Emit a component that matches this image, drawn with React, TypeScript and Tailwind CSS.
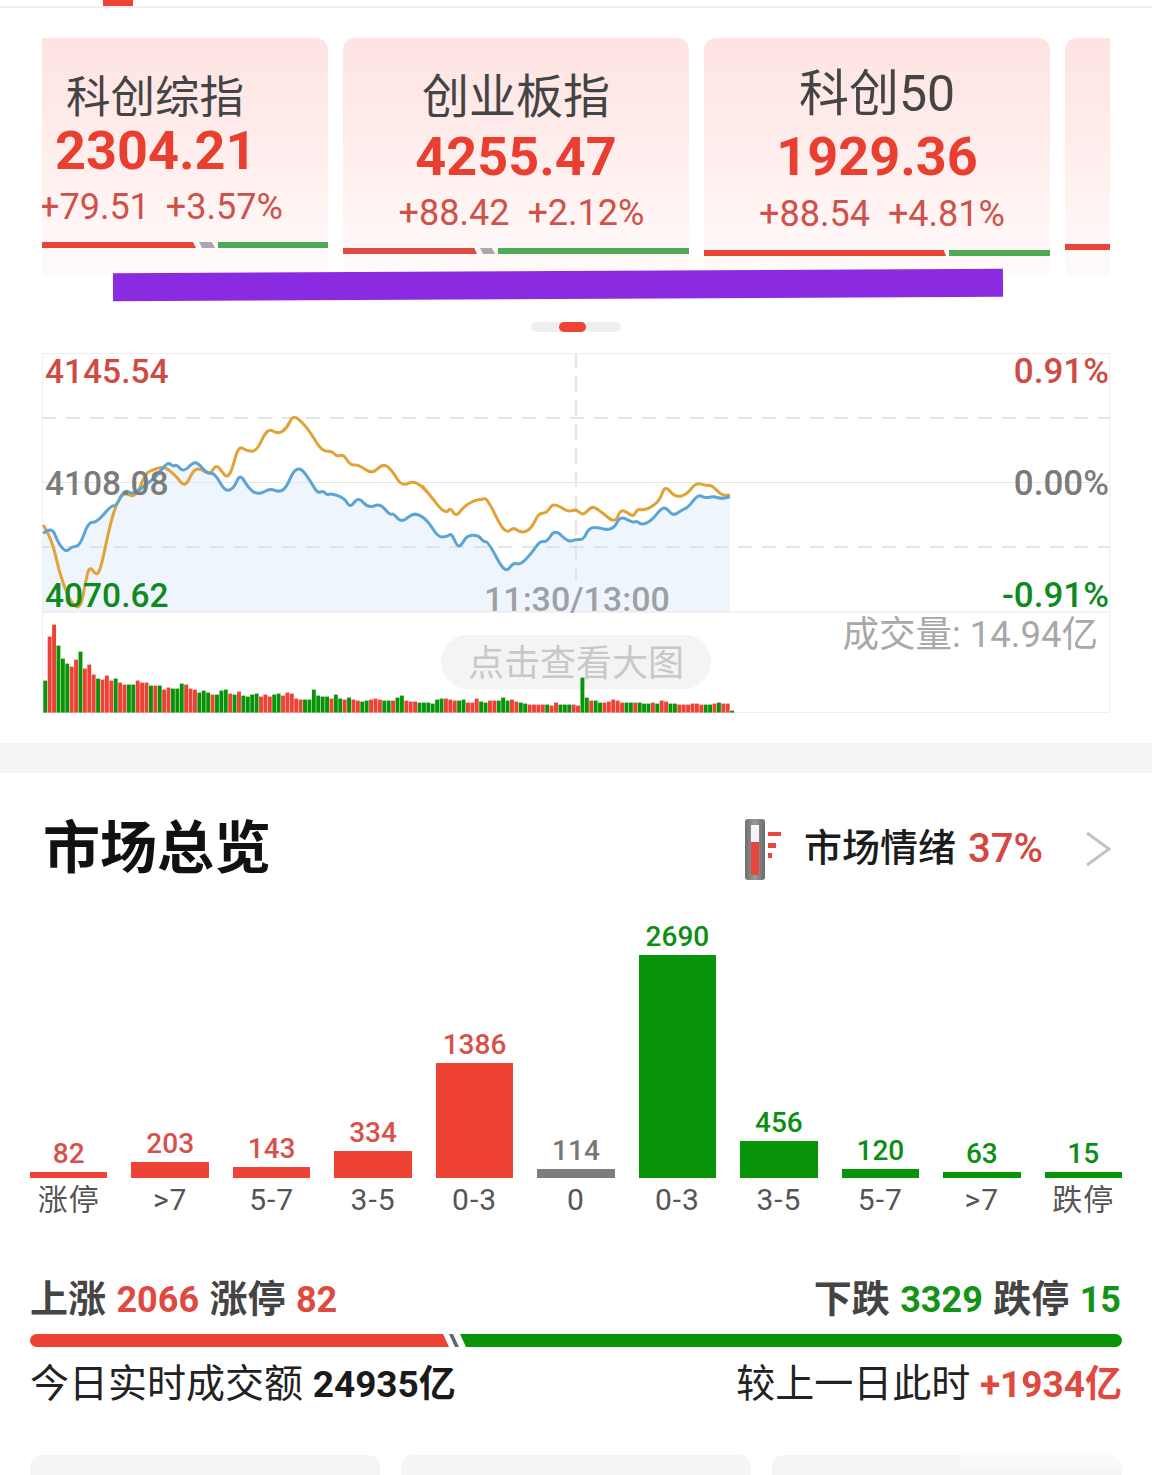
import React from 'react';

const RED = '#ee4235';
const GREEN = '#089408';

// points read off the reference, in zoom-crop pixels
const orangeA = [[40,540],[65,580],[90,690],[120,770],[150,795],[165,720],[178,660],[200,695],[215,660],[240,540],[258,480],[280,440],[318,460],[345,385],[375,372],[405,365],[440,395],[465,428],[490,375],[510,370],[540,390],[560,355],[588,400],[605,380],[625,302],[650,318],[680,320],[712,248],[745,268],[770,250],[788,212],[810,225],[840,260],[865,303],[885,320],[905,318],[920,335],[940,328],[962,362],[985,358],[1025,388],[1060,355],[1085,375],[1115,425],[1155,405],[1200,450]];
const orangeB = [[0,415],[30,450],[60,490],[80,503],[92,488],[108,517],[135,480],[175,462],[185,465],[200,457],[245,550],[265,562],[280,547],[305,565],[335,550],[355,505],[380,505],[400,472],[445,502],[468,492],[490,513],[515,482],[540,497],[585,535],[600,497],[615,497],[640,517],[652,492],[665,495],[690,490],[720,465],[735,420],[765,457],[800,450],[828,412],[860,423],[875,420],[905,452],[930,450]];
const blueA = [[40,565],[65,543],[85,595],[108,622],[125,605],[150,603],[175,530],[200,533],[245,480],[258,485],[283,432],[310,450],[345,420],[380,395],[412,350],[430,365],[440,358],[460,382],[490,352],[505,355],[530,385],[555,385],[585,440],[612,430],[630,385],[655,430],[685,450],[720,430],[750,442],[770,425],[790,378],[812,368],[840,405],[862,445],[880,437],[890,450],[905,445],[945,460],[960,490],[985,455],[1015,490],[1050,475],[1080,510],[1090,505],[1115,535],[1155,498],[1200,535]];
const blueB = [[0,510],[25,530],[55,577],[80,575],[95,565],[112,605],[125,600],[140,572],[175,570],[190,590],[205,590],[255,687],[280,652],[300,660],[335,625],[360,587],[380,592],[405,552],[445,592],[470,582],[490,585],[508,547],[540,548],[560,555],[585,547],[600,513],[640,533],[650,528],[665,540],[695,527],[725,488],[740,490],[760,513],[785,495],[805,487],[835,447],[855,460],[880,453],[905,462],[930,455]];

const toPage = (a: number[][], ox: number) => a.map(([x, y]) => [ox + x / 3, 345 + y / 3]);

// rounds the line off through the midpoints between readings
const smooth = (p: number[][]) => {
  let d = `M${p[0][0].toFixed(1)} ${p[0][1].toFixed(1)}`;
  for (let i = 1; i < p.length - 1; i++) {
    const mx = (p[i][0] + p[i + 1][0]) / 2;
    const my = (p[i][1] + p[i + 1][1]) / 2;
    d += ` Q${p[i][0].toFixed(1)} ${p[i][1].toFixed(1)} ${mx.toFixed(1)} ${my.toFixed(1)}`;
  }
  const last = p[p.length - 1];
  return `${d} L${last[0].toFixed(1)} ${last[1].toFixed(1)}`;
};

const orange = smooth([...toPage(orangeA, 30), ...toPage(orangeB, 420)]);
const blue = smooth([...toPage(blueA, 30), ...toPage(blueB, 420)]);
const area = `${blue} L730 612 L43 612 Z`;

// positive = red bar, negative = green bar
const volumes = [
  -32,76,88,-67,-54,-49,46,53,-61,44,48,38,-34,33,37,32,-34,30,28,-28,-28,32,30,30,-27,27,-27,23,25,-24,-24,-29,28,24,23,-20,-22,-20,18,-18,-22,-23,19,
  -18,21,-17,-16,-18,-19,16,18,16,-18,-19,17,20,19,14,13,-13,-13,-23,-17,-16,-16,14,-18,-14,13,-15,13,12,-11,-12,13,14,13,-12,-12,12,-15,-17,12,11,11,-10,-10,
  -10,-9,-13,-14,14,13,12,-12,-13,10,10,14,-11,-10,12,12,-12,-15,-12,13,11,-10,-9,8,8,8,8,-8,7,10,-8,-8,-8,8,7,-35,-15,12,-12,-10,10,11,13,12,10,-10,-10,10,-10,-9,-9,10,-9,12,11,-9,-9,8,8,8,9,9,8,-8,-8,9,-10,9,9,-2,
];

const bars = [
  { value: '82', label: '涨停', h: 'h-[6px]', c: 'text-[#d9504a]', b: 'bg-[#ee4235]' },
  { value: '203', label: '>7', h: 'h-[16px]', c: 'text-[#d9504a]', b: 'bg-[#ee4235]' },
  { value: '143', label: '5-7', h: 'h-[11px]', c: 'text-[#d9504a]', b: 'bg-[#ee4235]' },
  { value: '334', label: '3-5', h: 'h-[27px]', c: 'text-[#d9504a]', b: 'bg-[#ee4235]' },
  { value: '1386', label: '0-3', h: 'h-[115px]', c: 'text-[#d9504a]', b: 'bg-[#ee4235]' },
  { value: '114', label: '0', h: 'h-[9px]', c: 'text-[#777777]', b: 'bg-[#7d7d7d]' },
  { value: '2690', label: '0-3', h: 'h-[223px]', c: 'text-[#0b8f12]', b: 'bg-[#089408]' },
  { value: '456', label: '3-5', h: 'h-[37px]', c: 'text-[#0b8f12]', b: 'bg-[#089408]' },
  { value: '120', label: '5-7', h: 'h-[9px]', c: 'text-[#0b8f12]', b: 'bg-[#089408]' },
  { value: '63', label: '>7', h: 'h-[6px]', c: 'text-[#0b8f12]', b: 'bg-[#089408]' },
  { value: '15', label: '跌停', h: 'h-[6px]', c: 'text-[#0b8f12]', b: 'bg-[#089408]' },
];

const cardBg = 'bg-gradient-to-b from-[#fde3e1] via-[#fff1f0] via-60% to-[#fffbfb]';

const Thermometer = () => (
  <svg width="40" height="64" viewBox="0 0 40 64">
    <defs>
      <linearGradient id="th" x1="0" y1="0" x2="1" y2="0">
        <stop offset="0" stopColor="#6f6f6f" />
        <stop offset="0.5" stopColor="#9a9a9a" />
        <stop offset="1" stopColor="#6a6a6a" />
      </linearGradient>
    </defs>
    <rect x="1" y="2" width="20" height="61" rx="3" fill="url(#th)" />
    <rect x="7" y="8" width="8" height="50" fill="#f4f4f4" />
    <rect x="7" y="25" width="8" height="33" fill="#e8473b" />
    <rect x="24" y="15" width="13" height="4" fill="#e8473b" />
    <rect x="24" y="26" width="8" height="5" fill="#e8473b" />
    <rect x="24" y="36" width="4" height="5" fill="#e8473b" />
  </svg>
);

export default function App() {
  return (
    <div className="relative w-[1152px] h-[1475px] overflow-hidden bg-white font-['Roboto','Noto_Sans_CJK_SC',sans-serif]">
      <div className="h-[8px] border-b-2 border-[#eeeeee]">
        <div className="ml-[103px] w-[30px] h-[6px] bg-[#ee4235]" />
      </div>

      {/* index cards */}
      <div className="relative pt-[30px]">
        <div className="flex gap-[15px] ml-[42px] w-[1068px] overflow-hidden">
          <div className={`w-[286px] h-[240px] shrink-0 overflow-hidden rounded-r-xl ${cardBg} pt-[32px]`}>
            <div className="pl-[24px] h-[56px] leading-[56px] text-[44.5px] text-[#444444]">科创综指</div>
            <div className="pl-[13px] h-[50px] leading-[50px] text-[54px] font-bold text-[#e83f31]">2304.21</div>
            <div className="mt-[13px] -ml-[3px] flex gap-[16px] h-[36px] leading-[36px] text-[36px] text-[#cf5149] whitespace-nowrap">
              <span>+79.51</span><span>+3.57%</span>
            </div>
            <div className="mt-[17px] flex h-[6px]">
              <div className="w-[154px] bg-[#e8453a] [clip-path:polygon(0_0,98%_0,100%_100%,0_100%)]" />
              <div className="ml-[3px] w-[16px] bg-[#a9a9ad] [clip-path:polygon(0_0,80%_0,100%_100%,20%_100%)]" />
              <div className="ml-[3px] flex-1 bg-[#4faa55]" />
            </div>
          </div>

          <div className={`w-[346px] h-[240px] shrink-0 overflow-hidden rounded-xl ${cardBg} pt-[31px]`}>
            <div className="text-center h-[56px] leading-[56px] text-[47px] text-[#444444]">创业板指</div>
            <div className="mt-[7px] text-center h-[50px] leading-[50px] text-[54px] font-bold text-[#e83f31]">4255.47</div>
            <div className="mt-[13px] pl-[11px] flex justify-center gap-[18px] h-[36px] leading-[36px] text-[36px] text-[#cf5149] whitespace-nowrap">
              <span>+88.42</span><span>+2.12%</span>
            </div>
            <div className="mt-[17px] flex h-[6px]">
              <div className="w-[134px] bg-[#dc4a40] [clip-path:polygon(0_0,98%_0,100%_100%,0_100%)]" />
              <div className="ml-[3px] w-[15px] bg-[#a9a9ad] [clip-path:polygon(0_0,80%_0,100%_100%,20%_100%)]" />
              <div className="ml-[3px] flex-1 bg-[#4faa55]" />
            </div>
          </div>

          <div className={`w-[346px] h-[240px] shrink-0 overflow-hidden rounded-xl ${cardBg} pt-[28px]`}>
            <div className="text-center h-[56px] leading-[56px] text-[50px] text-[#444444]">科创50</div>
            <div className="mt-[10px] text-center h-[50px] leading-[50px] text-[54px] font-bold text-[#e83f31]">1929.36</div>
            <div className="mt-[14px] pl-[10px] flex justify-center gap-[18px] h-[36px] leading-[36px] text-[36px] text-[#cf5149] whitespace-nowrap">
              <span>+88.54</span><span>+4.81%</span>
            </div>
            <div className="mt-[18px] flex h-[6px]">
              <div className="w-[242px] bg-[#e8453a] [clip-path:polygon(0_0,99%_0,100%_100%,0_100%)]" />
              <div className="ml-[3px] flex-1 bg-[#4faa55]" />
            </div>
          </div>

          <div className={`w-[60px] h-[240px] shrink-0 overflow-hidden rounded-l-xl ${cardBg} pt-[206px]`}>
            <div className="h-[6px] bg-[#e8453a]" />
          </div>
        </div>

        {/* purple strip lying over the cards */}
        <div className="absolute left-[113px] top-[263px] w-[890px] h-[28px] bg-[#8a2be2] -rotate-[0.28deg]" />
      </div>

      {/* carousel dots */}
      <div className="mt-[44px] ml-[531px] w-[90px] h-[10px] rounded-full bg-[#eeeeee]">
        <div className="ml-[28px] w-[27px] h-[10px] rounded-full bg-[#ee4235]" />
      </div>

      {/* intraday chart */}
      <div className="relative mt-[21px] ml-[42px] w-[1068px] h-[360px]">
        <div className="absolute left-[399px] top-[282px] w-[270px] h-[54px] rounded-full bg-[#f4f4f4] text-center leading-[58px] text-[36px] text-[#c8c8c8]">
          点击查看大图
        </div>
        <svg className="absolute inset-0" width="1068" height="360" viewBox="42 353 1068 360">
          <rect x="42.5" y="353.5" width="1067" height="359" fill="none" stroke="#eeeeee" />
          <path d={area} fill="#eef5fc" />
          <line x1="42" x2="1110" y1="418" y2="418" stroke="#dddddd" strokeWidth="1.5" strokeDasharray="14 10" />
          <line x1="42" x2="1110" y1="547" y2="547" stroke="#dddddd" strokeWidth="1.5" strokeDasharray="14 10" />
          <line x1="42" x2="1110" y1="482.5" y2="482.5" stroke="#e6e6e6" />
          <line x1="42" x2="1110" y1="612" y2="612" stroke="#e6e6e6" />
          <line x1="576" x2="576" y1="353" y2="580" stroke="#dddddd" strokeWidth="1.5" strokeDasharray="14 10" />
          <path d={orange} fill="none" stroke="#e2a236" strokeWidth="3" strokeLinejoin="round" />
          <path d={blue} fill="none" stroke="#5ba4d4" strokeWidth="3" strokeLinejoin="round" />
          {volumes.map((v, i) => (
            <rect key={i} x={43.3 + i * 4.403} y={712.6 - Math.abs(v)} width="3.9" height={Math.abs(v)} fill={v > 0 ? RED : GREEN} />
          ))}
        </svg>
        <span className="absolute left-[3px] -top-[1px] leading-[40px] text-[33.5px] font-medium text-[#cf4a42]">4145.54</span>
        <span className="absolute left-[3px] top-[111px] leading-[40px] text-[33.5px] font-medium text-[#7b7b7b]">4108.08</span>
        <span className="absolute left-[3px] top-[223px] leading-[40px] text-[33.5px] font-medium text-[#0d8a1c]">4070.62</span>
        <span className="absolute right-[1px] -top-[1px] leading-[40px] text-[35px] font-medium text-[#cf4a42]">0.91%</span>
        <span className="absolute right-[1px] top-[111px] leading-[40px] text-[35px] font-medium text-[#7b7b7b]">0.00%</span>
        <span className="absolute right-[1px] top-[223px] leading-[40px] text-[35px] font-medium text-[#0d8a1c]">-0.91%</span>
        <span className="absolute left-[442px] top-[226px] leading-[40px] text-[34px] font-medium text-[#9da1a6]">11:30/13:00</span>
        <span className="absolute right-[12px] top-[262px] leading-[40px] text-[36.5px] text-[#a8a8a8]">成交量: 14.94亿</span>
      </div>

      <div className="mt-[30px] h-[30px] bg-[#f5f5f5]" />

      {/* market overview */}
      <div className="flex items-center justify-between h-[151px] pl-[43px] pr-[41px]">
        <div className="text-[57px] font-bold text-[#111111]">市场总览</div>
        <div className="flex items-center">
          <Thermometer />
          <span className="ml-[20px] text-[38px] font-medium text-[#1c1c1c]">市场情绪</span>
          <span className="ml-[12px] text-[40px] font-medium text-[#d4483f]">37%</span>
          <svg className="ml-[42px]" width="26" height="36" viewBox="0 0 26 36" fill="none">
            <path d="M2 2 L24 18 L2 34" stroke="#c4c4c4" strokeWidth="3" />
          </svg>
        </div>
      </div>

      <div className="px-[30px] grid grid-cols-11 grid-rows-[254px] gap-x-[24px] items-end h-[254px]">
        {bars.map((b, i) => (
          <div key={i} className="flex flex-col items-center">
            <div className={`mb-[2px] leading-[32px] text-[28px] font-medium ${b.c}`}>{b.value}</div>
            <div className={`w-full ${b.h} ${b.b}`} />
          </div>
        ))}
      </div>
      <div className="px-[30px] grid grid-cols-11 gap-x-[24px]">
        {bars.map((b, i) => (
          <div key={i} className="text-center leading-[44px] text-[30px] tracking-[1px] text-[#555555]">{b.label}</div>
        ))}
      </div>

      <div className="mt-[55px] px-[30px] flex justify-between leading-[44px] text-[38px] font-bold text-[#444444]">
        <div>上涨 <span className="mx-[1px] text-[36px] text-[#df4a40]">2066</span> 涨停 <span className="mx-[1px] text-[36px] text-[#df4a40]">82</span></div>
        <div>下跌 <span className="mx-[1px] text-[36px] text-[#139416]">3329</span> 跌停 <span className="mx-[1px] text-[36px] text-[#139416]">15</span></div>
      </div>

      <div className="mt-[12px] mx-[30px] flex h-[13px]">
        <div className="w-[419px] rounded-l-full bg-[#ee4235] [clip-path:polygon(0_0,98.6%_0,100%_100%,0_100%)]" />
        <div className="w-[10px] bg-[#666666] [clip-path:polygon(0_0,40%_0,100%_100%,60%_100%)]" />
        <div className="ml-[1px] flex-1 rounded-r-full bg-[#089408] [clip-path:polygon(0_0,100%_0,100%_100%,0.9%_100%)]" />
      </div>

      <div className="mt-[15px] px-[30px] flex justify-between leading-[44px] text-[39px] text-[#222222]">
        <div>今日实时成交额 <span className="text-[37px] font-bold text-[#1a1a1a]">24935亿</span></div>
        <div>较上一日此时 <span className="text-[37px] font-bold text-[#df4a40]">+1934亿</span></div>
      </div>

      <div className="mt-[48px] px-[30px] grid grid-cols-3 gap-x-[21px]">
        <div className="h-[40px] rounded-t-xl bg-[#f5f5f5]" />
        <div className="h-[40px] rounded-t-xl bg-[#f5f5f5]" />
        <div className="h-[40px] rounded-t-xl bg-[#f5f5f5]" />
      </div>

      {/* faint watermark smear */}
      <div className="absolute left-[960px] top-[1434px] w-[182px] h-[34px] bg-white/50 blur-[2px]" />
    </div>
  );
}
